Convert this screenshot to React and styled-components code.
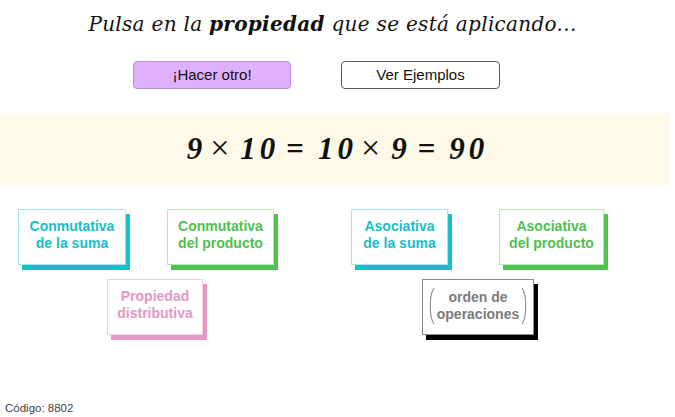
import React from 'react';
import styled, { createGlobalStyle } from 'styled-components';

const Global = createGlobalStyle`
    html, body { margin:0; padding:0; background:#fff; }
    body { width:675px; height:417px; overflow:hidden; }
`

const Page = styled.div`
    position:relative;
    width:675px;
    height:417px;
    display:flex;
    flex-direction:column;
    font-family:"Liberation Sans", Arial, sans-serif;
`

const Title = styled.h1`
    margin:0;
    height:48px;
    display:flex;
    align-items:center;
    justify-content:center;
    padding-right:10px;
    font-family:"DejaVu Serif", "Liberation Serif", serif;
    font-style:italic;
    font-weight:400;
    font-size:20px;
    letter-spacing:0.3px;
    color:#111;
    b{ font-weight:700; }
`

const ButtonRow = styled.div`
    display:flex;
    gap:50px;
    padding-left:133px;
    margin-top:13px;
`

const Button = styled.button`
    width:${p => p.$w}px;
    height:28px;
    box-sizing:border-box;
    border-radius:4px;
    border:1px solid ${p => p.$primary ? '#b98fd0' : '#5a5a5a'};
    background:${p => p.$primary ? '#dfb0fd' : '#fff'};
    font-family:"Liberation Sans", Arial, sans-serif;
    font-size:15px;
    color:#111;
    padding:0 0 2px 0;
    cursor:pointer;
`

const Band = styled.div`
    width:669px;
    height:72px;
    margin-top:24px;
    background:#fef9e9;
    display:flex;
    align-items:center;
    justify-content:center;
`

const Formula = styled.div`
    font-family:"Liberation Serif", "Times New Roman", serif;
    font-style:italic;
    font-weight:700;
    font-size:31px;
    letter-spacing:4px;
    color:#111;
    padding:0 0 3px 6px;
    span{ font-style:normal; font-weight:400; font-size:34px; margin:0 7px 0 4px; }
    i{ font-style:normal; margin:0 10px 0 7px; }
`

const CardRow = styled.div`
    display:flex;
    margin-top:${p => p.$top}px;
`

const Card = styled.div`
    box-sizing:border-box;
    width:${p => p.$w}px;
    height:56px;
    margin-left:${p => p.$left}px;
    border:1px solid ${p => p.$border};
    box-shadow:4px 5px 0 ${p => p.$shadow};
    background:#fff;
    color:${p => p.$color};
    display:flex;
    flex-direction:column;
    align-items:center;
    justify-content:center;
    font-family:"Liberation Sans", Arial, sans-serif;
    font-weight:700;
    font-size:14px;
    line-height:17px;
    padding-bottom:5px;
    cursor:pointer;
`

const Paren = styled.div`
    display:flex;
    align-items:center;
    gap:2px;
    margin-top:3px;
`

const Lines = styled.div`
    display:flex;
    flex-direction:column;
    align-items:center;
`

const Footer = styled.div`
    margin-top:auto;
    padding:0 0 3px 5px;
    font-size:11.5px;
    color:#444;
`

const colors = {
    cyan: { color:'#18bec9', border:'#a6e5ea', shadow:'#17bfcb' },
    green: { color:'#4fc04f', border:'#b8e6b8', shadow:'#4fc24f' },
    pink: { color:'#e597c4', border:'#f3cde2', shadow:'#e699c7' },
    grey: { color:'#7c7c7c', border:'#8a8a8a', shadow:'#000' },
}

const ParenSvg = ({ flip }) => (
    <svg width="7" height="38" viewBox="0 0 7 38" style={{ transform: flip ? 'scaleX(-1)' : 'none' }}>
        <path d="M6 1 C1 8 1 30 6 37" fill="none" stroke="#8a8a8a" strokeWidth="1.1" />
    </svg>
)

export default function App() {
    return (
        <Page>
            <Global />
            <Title>Pulsa en la&nbsp;<b>propiedad</b>&nbsp;que se está aplicando...</Title>

            <ButtonRow>
                <Button $primary $w={158}>¡Hacer otro!</Button>
                <Button $w={159}>Ver Ejemplos</Button>
            </ButtonRow>

            <Band>
                <Formula>9<span>×</span>10<i>=</i>10<span>×</span>9<i>=</i>90</Formula>
            </Band>

            <CardRow $top={24}>
                <Card $left={18} $w={108} $color={colors.cyan.color} $border={colors.cyan.border} $shadow={colors.cyan.shadow}>
                    <span>Conmutativa</span><span>de la suma</span>
                </Card>
                <Card $left={41} $w={107} $color={colors.green.color} $border={colors.green.border} $shadow={colors.green.shadow}>
                    <span>Conmutativa</span><span>del producto</span>
                </Card>
                <Card $left={77} $w={97} $color={colors.cyan.color} $border={colors.cyan.border} $shadow={colors.cyan.shadow}>
                    <span>Asociativa</span><span>de la suma</span>
                </Card>
                <Card $left={51} $w={105} $color={colors.green.color} $border={colors.green.border} $shadow={colors.green.shadow}>
                    <span>Asociativa</span><span>del producto</span>
                </Card>
            </CardRow>

            <CardRow $top={14}>
                <Card $left={107} $w={96} $color={colors.pink.color} $border={colors.pink.border} $shadow={colors.pink.shadow}>
                    <span>Propiedad</span><span>distributiva</span>
                </Card>
                <Card $left={219} $w={112} $color={colors.grey.color} $border={colors.grey.border} $shadow={colors.grey.shadow}>
                    <Paren>
                        <ParenSvg />
                        <Lines><span>orden de</span><span>operaciones</span></Lines>
                        <ParenSvg flip />
                    </Paren>
                </Card>
            </CardRow>

            <Footer>Código: 8802</Footer>
        </Page>
    );
}
